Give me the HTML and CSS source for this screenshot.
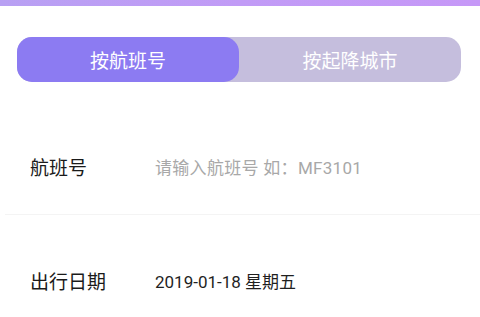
FILE: index.html
```html
<!DOCTYPE html>
<html>
<head>
    <title>航班查询</title>
    <link rel="stylesheet" href="styles.css">
</head>
<body>
    <div class="top-band"></div>

    <div class="tabs">
        <div class="tab active">按航班号</div>
        <div class="tab">按起降城市</div>
    </div>

    <div class="form">
        <div class="row first">
            <div class="row-label">航班号</div>
            <div class="row-value placeholder">请输入航班号 如：MF3101</div>
        </div>
        <div class="row second">
            <div class="row-label">出行日期</div>
            <div class="row-value">2019-01-18 星期五</div>
        </div>
    </div>
</body>
</html>
```

FILE: styles.css
```css
body {
    margin: 0;
    background: #fff;
    font-family: Roboto, "Noto Sans CJK SC", sans-serif;
    color: #1a1a1a;
    overflow: hidden;
}
.top-band {
    height: 6px;
    background: linear-gradient(90deg, #b8a0f3 0%, #c19bf6 50%, #c698f7 100%);
}
.tabs {
    display: flex;
    height: 45px;
    margin: 31px 19px 0 17px;
    background: #c5bedd;
    border-radius: 15px;
}
.tab {
    flex: 1;
    display: flex;
    align-items: center;
    justify-content: center;
    font-size: 19px;
    color: #fff;
    border-radius: 15px;
}
.tab.active {
    flex: 0 0 222px;
    background: #8c7bf2;
}
.form {
    display: flex;
    flex-direction: column;
}
.row {
    display: flex;
    align-items: center;
    height: 92px;
    margin-left: 5px;
    padding-left: 25px;
}
.row.first {
    margin-top: 38px;
    padding-bottom: 2px;
    border-bottom: 1px solid #f4f4f4;
}
.row.second {
    margin-top: 19px;
}
.row-label {
    width: 125px;
    font-size: 19px;
    color: #1a1a1a;
}
.row-value {
    font-size: 17px;
    color: #1f1f1f;
}
.placeholder {
    color: #a8a8a8;
    letter-spacing: 0.3px;
}
```
